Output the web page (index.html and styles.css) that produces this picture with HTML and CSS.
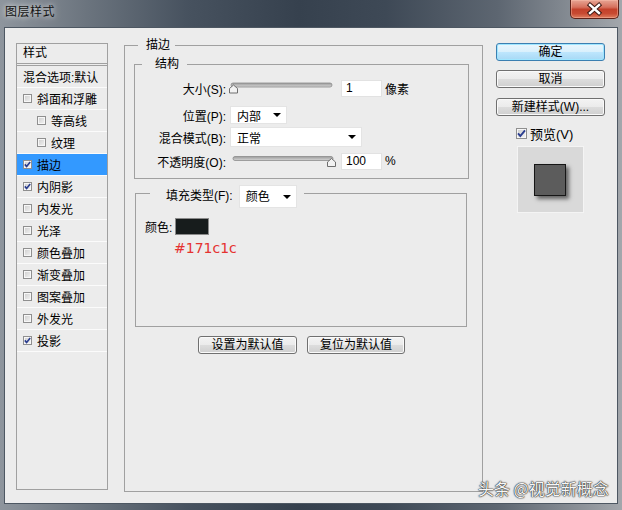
FILE: index.html
```html
<!DOCTYPE html>
<html lang="zh">
<head>
    <meta charset="UTF-8">
    <title>图层样式</title>
    <link rel="stylesheet" href="styles.css">
</head>
<body>
<div class="window">
    <div class="titlebar">
        <span class="title">图层样式</span>
        <span class="close">
            <svg width="47" height="18" viewBox="0 0 47 18">
                <path d="M19 5 L28 13 M28 5 L19 13" stroke="#3b1812" stroke-width="4.4" stroke-linecap="square" fill="none"/>
                <path d="M19 5 L28 13 M28 5 L19 13" stroke="#ffffff" stroke-width="2.4" stroke-linecap="square" fill="none"/>
            </svg>
        </span>
    </div>

    <div class="client">
        <div class="styles-list">
            <div class="list-head">样式</div>
            <div class="list-item">混合选项:默认</div>
            <div class="list-item"><span class="cb"></span>斜面和浮雕</div>
            <div class="list-item sub"><span class="cb"></span>等高线</div>
            <div class="list-item sub"><span class="cb"></span>纹理</div>
            <div class="list-item active"><span class="cb"><svg width="7" height="7" viewBox="0 0 7 7"><path d="M0.8 3.4 L2.6 5.4 L6.2 1" stroke="#2a3d8f" stroke-width="1.6" fill="none"/></svg></span>描边</div>
            <div class="list-item"><span class="cb"><svg width="7" height="7" viewBox="0 0 7 7"><path d="M0.8 3.4 L2.6 5.4 L6.2 1" stroke="#2a3d8f" stroke-width="1.6" fill="none"/></svg></span>内阴影</div>
            <div class="list-item"><span class="cb"></span>内发光</div>
            <div class="list-item"><span class="cb"></span>光泽</div>
            <div class="list-item"><span class="cb"></span>颜色叠加</div>
            <div class="list-item"><span class="cb"></span>渐变叠加</div>
            <div class="list-item"><span class="cb"></span>图案叠加</div>
            <div class="list-item"><span class="cb"></span>外发光</div>
            <div class="list-item"><span class="cb"><svg width="7" height="7" viewBox="0 0 7 7"><path d="M0.8 3.4 L2.6 5.4 L6.2 1" stroke="#2a3d8f" stroke-width="1.6" fill="none"/></svg></span>投影</div>
        </div>

        <fieldset class="group main-group">
            <legend>描边</legend>

            <fieldset class="group structure">
                <legend>结构</legend>
                <div class="row">
                    <span class="lbl">大小(S):</span>
                    <svg class="slider" width="110" height="20" viewBox="0 0 110 20">
                        <defs>
                            <linearGradient id="trk1" x1="0" y1="0" x2="0" y2="1">
                                <stop offset="0" stop-color="#9a9a9a"/>
                                <stop offset="1" stop-color="#d6d6d6"/>
                            </linearGradient>
                        </defs>
                        <rect x="3" y="5" width="101" height="4" rx="2" fill="url(#trk1)" stroke="#8c8c8c" stroke-width="0.8"/>
                        <path d="M1.5 15 V10.5 L5.5 7 L9.5 10.5 V15 Z" fill="#f2f2f2" stroke="#6e6e6e"/>
                    </svg>
                    <span class="num">1</span>
                    <span class="unit">像素</span>
                </div>
                <div class="row r2">
                    <span class="lbl">位置(P):</span>
                    <div class="dd pos">内部<i class="arrow"></i></div>
                </div>
                <div class="row r3">
                    <span class="lbl">混合模式(B):</span>
                    <div class="dd mode">正常<i class="arrow"></i></div>
                </div>
                <div class="row r4">
                    <span class="lbl">不透明度(O):</span>
                    <svg class="slider" width="110" height="20" viewBox="0 0 110 20">
                        <defs>
                            <linearGradient id="trk2" x1="0" y1="0" x2="0" y2="1">
                                <stop offset="0" stop-color="#9a9a9a"/>
                                <stop offset="1" stop-color="#d6d6d6"/>
                            </linearGradient>
                        </defs>
                        <rect x="5" y="5.5" width="100" height="4" rx="2" fill="url(#trk2)" stroke="#8c8c8c" stroke-width="0.8"/>
                        <path d="M99.5 15.5 V11 L103.5 7.5 L107.5 11 V15.5 Z" fill="#f2f2f2" stroke="#6e6e6e"/>
                    </svg>
                    <span class="num">100</span>
                    <span class="unit">%</span>
                </div>
            </fieldset>

            <fieldset class="group fill">
                <legend>
                    <span class="fill-lbl">填充类型(F):</span>
                    <div class="dd kind">颜色<i class="arrow"></i></div>
                </legend>
                <div class="color-row">
                    <span>颜色:</span>
                    <span class="swatch"></span>
                </div>
                <div class="hex">#171c1c</div>
            </fieldset>

            <div class="defaults">
                <button class="btn wide">设置为默认值</button>
                <button class="btn">复位为默认值</button>
            </div>
        </fieldset>

        <div class="side">
            <button class="btn ok">确定</button>
            <button class="btn cancel">取消</button>
            <button class="btn new-style">新建样式(W)...</button>
            <div class="preview-check">
                <span class="cb big"><svg width="9" height="9" viewBox="0 0 9 9"><path d="M1 4.4 L3.3 7 L8 1.4" stroke="#2a3d8f" stroke-width="1.9" fill="none"/></svg></span>
                <span>预览(V)</span>
            </div>
            <div class="preview">
                <div class="preview-square"></div>
            </div>
        </div>
    </div>

    <div class="watermark">头条 @视觉新概念</div>
</div>
</body>
</html>
```

FILE: styles.css
```css
* {
    box-sizing: border-box;
}

body {
    margin: 0;
    font-family: "Liberation Sans", "Noto Sans CJK SC", sans-serif;
    font-size: 12px;
    color: #000;
}

.window {
    position: relative;
    width: 622px;
    height: 510px;
    overflow: hidden;
    background: linear-gradient(to right, #8e959d 0%, #6b747e 14%, #47525f 30%, #36414e 48%, #3e4956 62%, #5d6671 80%, #8a9097 93%, #a3a7ac 100%);
}

.titlebar {
    height: 27px;
    display: flex;
    align-items: flex-start;
}

.title {
    margin: 4px 0 0 5px;
    line-height: 16px;
    letter-spacing: 0.5px;
    color: #111;
    text-shadow: 0 0 5px rgba(255, 255, 255, 0.7), 0 0 9px rgba(255, 255, 255, 0.5);
}

.close {
    margin-left: auto;
    margin-right: 3px;
    width: 49px;
    height: 19px;
    border: 1px solid #5e2219;
    border-top: none;
    border-radius: 0 0 5px 5px;
    background: linear-gradient(#e7a594 0%, #d6715d 40%, #c3412b 52%, #c84a32 75%, #de7d5f 100%);
    box-shadow: inset 0 0 0 1px rgba(255, 200, 180, 0.4);
}

.close svg {
    display: block;
}

.client {
    margin-left: 4px;
    width: 614px;
    height: 477px;
    background: #ececec;
    border: 1px solid #4d5762;
    display: flex;
    align-items: flex-start;
    padding: 9px 0 0 11px;
}

/* left list */
.styles-list {
    width: 92px;
    height: 447px;
    margin-top: 6px;
    border: 1px solid #a0a0a0;
}

.list-head {
    height: 22px;
    padding-left: 6px;
    line-height: 18px;
    border-bottom: 3px double #a0a0a0;
}

.list-item {
    height: 22px;
    padding-left: 6px;
    display: flex;
    align-items: center;
    gap: 5px;
    border-bottom: 1px solid #fbfbfb;
    white-space: nowrap;
}

.list-item.sub {
    padding-left: 20px;
}

.list-item.active {
    background: #3399ff;
}

.cb {
    width: 9px;
    height: 9px;
    flex-shrink: 0;
    display: flex;
    align-items: center;
    justify-content: center;
    border: 1px solid #8f8f8f;
    background: linear-gradient(135deg, #cdcdcd, #f4f4f4);
    box-shadow: inset 0 0 0 1px #f7f7f7;
}

.cb.big {
    width: 11px;
    height: 11px;
}

/* group boxes */
.group {
    margin: 0;
    padding: 0;
    min-width: 0;
    border: 1px solid #a0a0a0;
}

.group > legend {
    padding: 0;
    line-height: 16px;
}

.main-group {
    width: 359px;
    height: 455px;
    margin-left: 16px;
    padding: 3px 13px 0 9px;
}

.main-group > legend {
    margin-left: 4px;
    padding: 0 5px 0 8px;
}

.structure {
    width: 335px;
    padding: 6px 0 7px 0;
}

.structure > legend {
    margin-left: 7px;
    padding: 0 8px 0 13px;
}

.row {
    height: 20px;
    display: flex;
    align-items: center;
}

.r2 {
    margin-top: 7px;
}

.r3 {
    margin-top: 2px;
}

.r4 {
    margin-top: 4px;
}

.lbl {
    width: 91px;
    flex-shrink: 0;
    text-align: right;
    white-space: nowrap;
}

.slider {
    display: block;
    margin-left: 2px;
}

.num {
    width: 41px;
    height: 17px;
    margin-left: 3px;
    padding-left: 4px;
    line-height: 15px;
    background: #fff;
    border: 1px solid #e2e2e2;
}

.unit {
    margin-left: 3px;
}

.dd {
    display: flex;
    align-items: center;
    padding: 0 5px 0 6px;
    background: #fff;
    border: 1px solid #e4e4e4;
    margin-left: 4px;
}

.dd.pos {
    width: 57px;
    height: 18px;
}

.dd.mode {
    width: 132px;
    height: 20px;
}

.arrow {
    margin-left: auto;
    width: 0;
    height: 0;
    border-left: 4px solid transparent;
    border-right: 4px solid transparent;
    border-top: 4px solid #000;
}

.fill {
    width: 332px;
    height: 143px;
    margin: 5px 0 0 1px;
    padding: 14px 0 0 9px;
}

.fill > legend {
    height: 18px;
    margin-left: 5px;
    padding: 0 7px 0 16px;
    display: flex;
    align-items: flex-start;
    gap: 6px;
}

.fill-lbl {
    margin-top: 1px;
    line-height: 23px;
    white-space: nowrap;
}

.dd.kind {
    width: 58px;
    height: 23px;
    margin: 1px 0 0 0;
}

.color-row {
    height: 20px;
    display: flex;
    align-items: center;
}

.swatch {
    width: 34px;
    height: 17px;
    margin-left: 3px;
    background: #171c1c;
    border: 1px solid #8a8a8a;
}

.hex {
    margin: 3px 0 0 29px;
    font-family: "DejaVu Sans", sans-serif;
    font-size: 14px;
    line-height: 18px;
    color: #e53230;
}

/* buttons */
.btn {
    height: 18px;
    padding: 0;
    font-family: inherit;
    font-size: 12px;
    line-height: 16px;
    color: #000;
    border: 1px solid #707070;
    border-radius: 3px;
    background: linear-gradient(#f3f3f3 0%, #ebebeb 50%, #dddddd 50%, #cfcfcf 100%);
    box-shadow: inset 0 0 0 1px #fafafa;
}

.defaults {
    display: flex;
    justify-content: center;
    gap: 10px;
    margin-top: 9px;
}

.defaults .btn {
    width: 98px;
}

.defaults .btn.wide {
    width: 99px;
}

.side {
    width: 109px;
    margin: 6px 0 0 13px;
    display: flex;
    flex-direction: column;
    align-items: center;
}

.side .btn {
    width: 109px;
}

.btn.ok {
    border-color: #3c7fb1;
    background: linear-gradient(#eaf6fd 0%, #d9f0fc 50%, #bee6fd 50%, #a7d9f5 100%);
    box-shadow: inset 0 0 0 1px #9fe6ff;
}

.btn.cancel {
    margin-top: 9px;
}

.btn.new-style {
    margin-top: 10px;
}

.preview-check {
    align-self: flex-start;
    margin: 8px 0 0 20px;
    height: 18px;
    display: flex;
    align-items: center;
    gap: 3px;
    font-size: 13px;
}

.preview {
    width: 67px;
    height: 67px;
    margin-top: 4px;
    padding: 17px 0 0 16px;
    background: #d9d9d9;
    border: 1px solid #f4f4f4;
}

.preview-square {
    width: 32px;
    height: 32px;
    background: #5c5c5c;
    border: 1px solid #161616;
    box-shadow: 3px 3px 4px rgba(0, 0, 0, 0.55);
}

.watermark {
    position: absolute;
    left: 478px;
    top: 477px;
    font-family: "Noto Sans CJK SC", sans-serif;
    font-size: 16px;
    line-height: 22px;
    color: #f6f6f6;
    text-shadow: 0 0 1px #222, 0 0 1px #222, 0 0 2px #444;
}
```
